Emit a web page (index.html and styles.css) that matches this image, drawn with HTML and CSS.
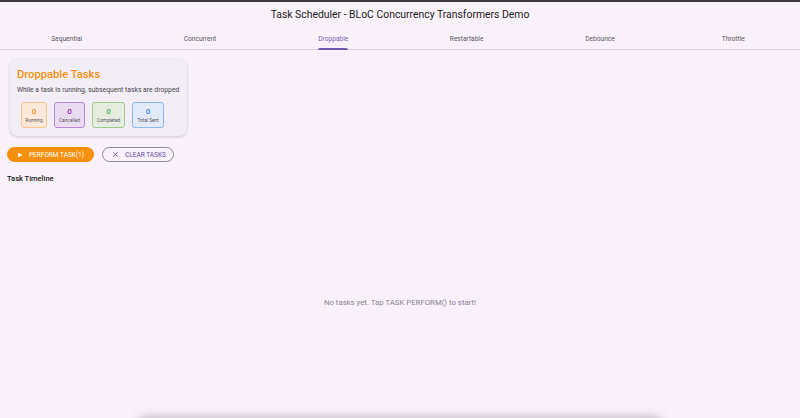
FILE: index.html
```html
<!DOCTYPE html>
<html>
<head>
<meta charset="utf-8">
<link rel="stylesheet" href="styles.css">
</head>
<body>
<div class="app">
  <header class="appbar">Task Scheduler - BLoC Concurrency Transformers Demo</header>
  <nav class="tabs">
    <div class="tab">Sequential</div>
    <div class="tab">Concurrent</div>
    <div class="tab active"><span>Droppable</span></div>
    <div class="tab">Restartable</div>
    <div class="tab">Debounce</div>
    <div class="tab">Throttle</div>
  </nav>
  <main class="content">
    <section class="card">
      <h1 class="card-title">Droppable Tasks</h1>
      <p class="card-sub">While a task is running, subsequent tasks are dropped</p>
      <div class="stats">
        <div class="stat running"><div class="num">0</div><div class="lbl">Running</div></div>
        <div class="stat cancelled"><div class="num">0</div><div class="lbl">Cancelled</div></div>
        <div class="stat completed"><div class="num">0</div><div class="lbl">Completed</div></div>
        <div class="stat total"><div class="num">0</div><div class="lbl">Total Sent</div></div>
      </div>
    </section>
    <div class="actions">
      <button class="btn primary"><svg width="6" height="6" viewBox="0 0 10 10"><path d="M2 1 L9 5 L2 9 Z" fill="#fff"/></svg>PERFORM TASK(1)</button>
      <button class="btn outline"><svg width="7" height="7" viewBox="0 0 10 10"><path d="M2 2 L8 8 M8 2 L2 8" stroke="#6750a4" stroke-width="1.4" fill="none"/></svg>CLEAR TASKS</button>
    </div>
    <h2 class="timeline">Task Timeline</h2>
    <div class="empty">No tasks yet. Tap TASK PERFORM() to start!</div>
  </main>
  <div class="sheet"></div>
</div>
</body>
</html>
```
FILE: styles.css
```css
* { box-sizing: border-box; }
html, body { margin: 0; padding: 0; }
body {
  width: 800px;
  height: 418px;
  overflow: hidden;
  background: #f8f1f9;
  font-family: Roboto, "Noto Sans", sans-serif;
  color: #1d1b20;
}
.app {
  position: relative;
  height: 418px;
  overflow: hidden;
  display: flex;
  flex-direction: column;
  border-top: 2px solid #3c3a3e;
}
.appbar {
  height: 24px;
  display: flex;
  align-items: center;
  justify-content: center;
  font-size: 10.4px;
  color: #1d1b20;
}
.tabs {
  display: flex;
  height: 24px;
  border-bottom: 1px solid #d9d2dc;
}
.tab {
  flex: 1;
  display: flex;
  align-items: center;
  justify-content: center;
  font-size: 6.6px;
  color: #5a5660;
  padding-top: 2px;
}
.tab.active { color: #7a62b8; }
.tab.active span {
  position: relative;
  display: inline-block;
}
.tab.active span::after {
  content: "";
  position: absolute;
  left: 0;
  right: 0;
  bottom: -7px;
  height: 2px;
  background: #6f58b0;
  border-radius: 2px 2px 0 0;
}
.content {
  flex: 1;
  display: flex;
  flex-direction: column;
  padding: 9px 7px 0 7px;
}
.card {
  width: 177px;
  margin-left: 3px;
  background: #f3edf5;
  border-radius: 8px;
  box-shadow: 0 1px 3px rgba(0,0,0,0.18);
  padding: 8px 7px 8px 7px;
}
.card-title {
  margin: 0;
  font-size: 11.2px;
  font-weight: 500;
  color: #f5900f;
  line-height: 15px;
}
.card-sub {
  margin: 4px 0 0 0;
  font-size: 6.8px;
  color: #49454f;
  line-height: 9px;
}
.stats {
  display: flex;
  gap: 7px;
  margin-top: 7px;
  padding-left: 4px;
}
.stat {
  height: 26px;
  border-radius: 3px;
  border: 1px solid;
  display: flex;
  flex-direction: column;
  align-items: center;
  justify-content: center;
  padding: 0 3px;
  min-width: 26px;
}
.num { font-size: 8px; font-weight: 500; line-height: 10px; }
.lbl { font-size: 4.8px; color: #5a5660; line-height: 7px; }
.running { background: #fbe8da; border-color: #f6c68e; color: #f5900f; }
.cancelled { background: #eadcf0; border-color: #b98ad2; color: #8e2fb0; width: 31px; }
.completed { background: #e7ece1; border-color: #9ecb8c; color: #4caf50; width: 33px; }
.total { background: #e3eaf7; border-color: #8bb8ef; color: #2f86e5; width: 32px; }
.actions {
  display: flex;
  gap: 8px;
  margin-top: 11px;
}
.btn {
  height: 15px;
  border-radius: 8px;
  font-family: inherit;
  font-size: 6.5px;
  white-space: nowrap;
  display: flex;
  align-items: center;
  gap: 6px;
  cursor: pointer;
}
.btn.primary {
  width: 87px;
  background: #f5900f;
  color: #fff;
  border: none;
  padding: 0 0 0 10px;
}
.btn.outline {
  width: 72px;
  background: transparent;
  border: 1px solid #8e8a94;
  color: #6750a4;
  padding: 0 0 0 9px;
}
.timeline {
  margin: 12px 0 0 0;
  font-size: 7.5px;
  font-weight: 500;
  line-height: 10px;
}
.empty {
  margin-top: 114px;
  text-align: center;
  font-size: 7.8px;
  color: #8a8590;
}
.sheet {
  position: absolute;
  left: 135px;
  right: 135px;
  bottom: -30px;
  height: 30px;
  background: #f8f1f9;
  box-shadow: 0 -2px 10px rgba(60,40,70,0.25);
  border-radius: 14px 14px 0 0;
}
```
